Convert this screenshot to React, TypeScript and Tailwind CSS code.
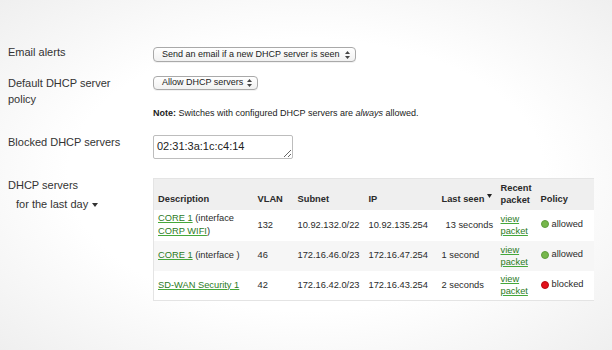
import type { ReactNode } from 'react';

const servers = [
  { name: 'CORE 1', iface: 'CORP WIFI', vlan: '132', subnet: '10.92.132.0/22', ip: '10.92.135.254', seen: '13 seconds', policy: 'allowed' },
  { name: 'CORE 1', iface: '', vlan: '46', subnet: '172.16.46.0/23', ip: '172.16.47.254', seen: '1 second', policy: 'allowed' },
  { name: 'SD-WAN Security 1', iface: null, vlan: '42', subnet: '172.16.42.0/23', ip: '172.16.43.254', seen: '2 seconds', policy: 'blocked' },
];

function Link({ children }: { children: ReactNode }) {
  return (
    <a className="text-[#2c7a1e] underline decoration-[#45a83a] underline-offset-[1px] cursor-pointer">
      {children}
    </a>
  );
}

function UpDown() {
  return (
    <svg width="5" height="8" viewBox="0 0 5 8" className="ml-[4px] shrink-0">
      <path d="M2.5 0 L5 3 H0 Z" fill="#444" />
      <path d="M2.5 8 L5 5 H0 Z" fill="#444" />
    </svg>
  );
}

function Select({ label, w, h }: { label: string; w: string; h: string }) {
  return (
    <div
      className={`flex items-center ${w} ${h} pl-[8px] pr-[5px] border border-[#a9a9a9] rounded-[4px] bg-gradient-to-b from-white to-[#f1f1f1] text-[9px] text-[#222] shadow-[0_1px_0_rgba(0,0,0,0.05)]`}
    >
      <span className="flex-1 whitespace-nowrap">{label}</span>
      <UpDown />
    </div>
  );
}

export default function App() {
  return (
    <div
      className="w-[612px] h-[350px] overflow-hidden bg-[radial-gradient(ellipse_at_center,#ffffff_55%,#efefef_100%)] text-[#333] pt-[44px] pl-[8px]"
      style={{ fontFamily: '"Liberation Sans", Arial, Helvetica, sans-serif' }}
    >
      {/* email alerts */}
      <div className="flex h-[31px]">
        <div className="w-[145px] text-[11px] leading-[16px]">Email alerts</div>
        <div className="mt-[3px]">
          <Select label="Send an email if a new DHCP server is seen" w="w-[203px]" h="h-[15px]" />
        </div>
      </div>

      {/* default policy */}
      <div className="flex h-[59px]">
        <div className="w-[145px] text-[11px] leading-[16px]">
          Default DHCP server
          <br />
          policy
        </div>
        <div className="mt-[1px]">
          <Select label="Allow DHCP servers" w="w-[105px]" h="h-[14px]" />
          <div className="mt-[17px] text-[9px] leading-[12px] whitespace-nowrap text-[#222]">
            <b>Note:</b> Switches with configured DHCP servers are <i>always</i> allowed.
          </div>
        </div>
      </div>

      {/* blocked */}
      <div className="flex h-[43px]">
        <div className="w-[145px] text-[11px] leading-[16px]">Blocked DHCP servers</div>
        <textarea
          readOnly
          defaultValue="02:31:3a:1c:c4:14"
          className="mt-[1px] w-[140px] h-[24px] border border-[#bdbdbd] rounded-[2px] bg-white px-[3px] py-[3px] text-[11px] leading-[14px] text-[#222] outline-none"
        />
      </div>

      {/* servers table */}
      <div className="flex">
        <div className="w-[145px] text-[11px] leading-[16px]">
          <div>DHCP servers</div>
          <div className="mt-[3px] pl-[8px] flex items-center">
            for the last day
            <svg width="6" height="4" viewBox="0 0 6 4" className="ml-[4px] mt-[1px]">
              <path d="M0 0 H6 L3 4 Z" fill="#333" />
            </svg>
          </div>
        </div>
        <table className="mt-[1px] table-fixed border-collapse w-[440px] text-[9.3px] leading-[13px] text-[#2a2a2a] border-l border-t border-b border-[#e4e4e4]">
          <colgroup>
            <col className="w-[100px]" />
            <col className="w-[40px]" />
            <col className="w-[71px]" />
            <col className="w-[73px]" />
            <col className="w-[59px]" />
            <col className="w-[40px]" />
            <col className="w-[57px]" />
          </colgroup>
          <thead>
            <tr className="h-[31px] bg-[#efefef] font-bold text-left">
              <th className="align-bottom pl-[4px] pb-[4px]">Description</th>
              <th className="align-bottom pl-[4px] pb-[4px]">VLAN</th>
              <th className="align-bottom pl-[4px] pb-[4px]">Subnet</th>
              <th className="align-bottom pl-[4px] pb-[4px]">IP</th>
              <th className="align-bottom pl-[4px] pb-[4px] whitespace-nowrap">
                Last seen
                <svg width="5" height="4" viewBox="0 0 5 4" className="inline-block ml-[3px] align-[4px]">
                  <path d="M0 0 H5 L2.5 4 Z" fill="#222" />
                </svg>
              </th>
              <th className="align-bottom pl-[4px] pb-[4px] leading-[12px]">
                Recent
                <br />
                packet
              </th>
              <th className="align-bottom pl-[4px] pb-[4px]">Policy</th>
            </tr>
          </thead>
          <tbody>
            {servers.map((s, i) => (
              <tr key={i} className={i === 1 ? 'h-[30px] bg-[#f6f6f6]' : i === 0 ? 'h-[31px] bg-white' : 'h-[30px] bg-white'}>
                <td className="pl-[4px] align-middle">
                  <Link>{s.name}</Link>
                  {s.iface === null ? null : s.iface ? (
                    <>
                      {' '}(interface
                      <br />
                      <Link>{s.iface}</Link>)
                    </>
                  ) : (
                    <> (interface )</>
                  )}
                </td>
                <td className="pl-[4px] align-middle">{s.vlan}</td>
                <td className="pl-[4px] align-middle">{s.subnet}</td>
                <td className="pl-[4px] align-middle">{s.ip}</td>
                <td className={`${i === 0 ? 'pl-[8px]' : 'pl-[4px]'} align-middle whitespace-nowrap`}>{s.seen}</td>
                <td className="pl-[4px] align-middle leading-[12px]">
                  <Link>
                    view
                    <br />
                    packet
                  </Link>
                </td>
                <td className="pl-[4px] align-middle">
                  <span className="inline-flex items-center">
                    <span
                      className={
                        s.policy === 'allowed'
                          ? 'w-[8px] h-[8px] rounded-full bg-[#76b74b] border border-[#5f9d3c] mr-[3px]'
                          : 'w-[8px] h-[8px] rounded-full bg-[#e3101a] border border-[#b80a12] mr-[3px]'
                      }
                    />
                    {s.policy}
                  </span>
                </td>
              </tr>
            ))}
          </tbody>
        </table>
      </div>
    </div>
  );
}
